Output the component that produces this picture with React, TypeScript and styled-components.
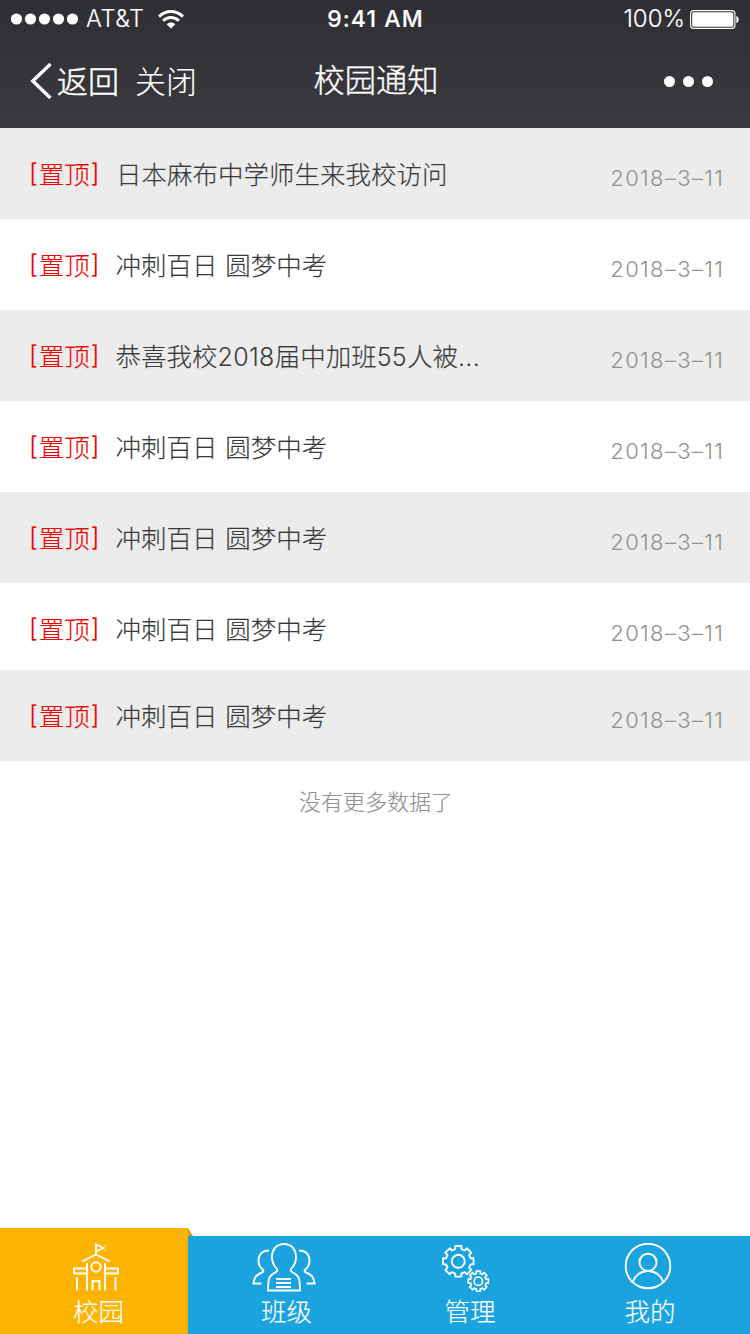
import React from 'react';
import styled, { createGlobalStyle } from 'styled-components';

const GlobalStyle = createGlobalStyle`
  * { box-sizing: border-box; }
  body {
    margin: 0;
    background: #fff;
    font-family: "Noto Sans CJK SC", "Liberation Sans", sans-serif;
    font-weight: 300;
    -webkit-text-stroke: 0.15px currentColor;
  }
`;

const Screen = styled.div`
  width: 750px;
  height: 1334px;
  display: flex;
  flex-direction: column;
  background: #fff;
  overflow: hidden;
`;

const Header = styled.header`
  height: 128px;
  flex: none;
  color: #fff;
  background: linear-gradient(#2f2e33, #3a393e);
`;

const StatusBar = styled.div`
  height: 38px;
  display: grid;
  grid-template-columns: 1fr auto 1fr;
  align-items: center;
  padding: 0 11px;
  font-family: Inter, "Liberation Sans", sans-serif;
  font-size: 24px;
  line-height: 38px;
`;

const StatusGroup = styled.div<{ $end?: boolean }>`
  display: flex;
  align-items: center;
  justify-content: ${(p) => (p.$end ? 'flex-end' : 'flex-start')};
`;

const Carrier = styled.span`
  margin: 0 13px 0 8px;
  font-size: 23.5px;
  font-weight: 300;
  letter-spacing: 0.6px;
`;

const Clock = styled.span`
  padding-left: 1px;
  font-size: 23px;
  font-weight: 500;
  letter-spacing: 1.1px;
`;

const Percent = styled.span`
  margin-right: 5px;
  font-size: 24px;
  font-weight: 300;
`;

const NavBar = styled.div`
  height: 90px;
  display: grid;
  grid-template-columns: 1fr auto 1fr;
  align-items: center;
  padding: 0 37px 4px 30px;
  font-size: 31px;
  line-height: 46px;
`;

const NavActions = styled.div`
  display: flex;
  align-items: center;
`;

const NavLink = styled.a<{ $gap: number; $stroke: number }>`
  margin-left: ${(p) => p.$gap}px;
  padding-bottom: 2px;
  -webkit-text-stroke-width: ${(p) => p.$stroke}px;
`;

const Title = styled.h1`
  margin: 0;
  padding: 0 0 4px 9px;
  font-size: 31.25px;
  font-weight: 300;
  -webkit-text-stroke-width: 0.35px;
`;

const MoreButton = styled.div`
  display: flex;
  justify-content: flex-end;
  gap: 8px;
`;

const MoreDot = styled.span`
  width: 11px;
  height: 11px;
  border-radius: 50%;
  background: #fff;
`;

const List = styled.main`
  flex: 1;
`;

const Row = styled.article<{ $shaded: boolean; $short?: boolean }>`
  height: ${(p) => (p.$short ? 87 : 91)}px;
  display: flex;
  align-items: flex-start;
  padding: 26px 27px 0 29px;
  background: ${(p) => (p.$shaded ? '#ececec' : '#fff')};
`;

const Pin = styled.span<{ $wide?: boolean }>`
  display: flex;
  gap: 1px;
  width: ${(p) => (p.$wide ? 87 : 86.5)}px;
  color: #f00000;
  font-size: 25.5px;
  line-height: 38px;
`;

const Bracket = styled.span`
  font-family: Inter, "Liberation Sans", sans-serif;
  font-size: 25px;
  line-height: 38px;
`;

const Subject = styled.span`
  flex: 1;
  color: #3a3a3a;
  font-size: 25.5px;
  line-height: 38px;
  white-space: pre;
  word-spacing: 2px;
`;

const Numeral = styled.span`
  font-family: Inter, "Liberation Sans", sans-serif;
  font-size: 25px;
  letter-spacing: 0.3px;
  -webkit-text-stroke-width: 0;
`;

const PostDate = styled.time`
  margin-right: -1.3px;
  padding-top: 5px;
  color: #919191;
  font-family: Inter, "Liberation Sans", sans-serif;
  font-size: 22px;
  line-height: 38px;
  letter-spacing: 1.35px;
  -webkit-text-stroke-width: 0;
`;

const EndNote = styled.p`
  margin: 0;
  padding: 23px 0 0 2px;
  text-align: center;
  color: #919191;
  font-size: 22px;
  line-height: 32px;
`;

const TabBar = styled.nav`
  flex: none;
  height: 106px;
  display: grid;
  grid-template-columns: 188px 190px 190px 182px;
  align-items: end;
`;

const Tab = styled.a<{ $active?: boolean }>`
  position: relative;
  height: ${(p) => (p.$active ? 106 : 98)}px;
  display: flex;
  flex-direction: column;
  align-items: flex-start;
  justify-content: flex-end;
  padding-bottom: 5px;
  color: #fff;
  background: ${(p) => (p.$active ? '#fdb400' : '#1ba3e0')};
  font-size: 25.5px;
  line-height: 38px;
`;

const TabIcon = styled.span<{ $inset: number }>`
  display: flex;
  margin: 0 0 -1px ${(p) => p.$inset}px;
`;

const TabLabel = styled.span<{ $inset: number }>`
  margin-left: ${(p) => p.$inset}px;
`;

const Fold = styled.span`
  position: absolute;
  left: 188px;
  top: 0;
  width: 5px;
  height: 8px;
  background: #d3a012;
  clip-path: polygon(0 0, 100% 100%, 0 100%);
`;

const SignalDots = () => (
  <svg width="67" height="12" fill="#fff">
    {[5.5, 19.5, 33.5, 47.5, 61.5].map((x) => (
      <circle key={x} cx={x} cy="6" r="5.6" />
    ))}
  </svg>
);

const Wifi = () => (
  <svg width="26" height="19" viewBox="0 0 26 19" fill="none" stroke="#fff" strokeWidth="2.9">
    <path d="M1 6.6C7.8-.2 18.2-.2 25 6.6" />
    <path d="M5.1 10.8c4.5-4.4 11.3-4.4 15.8 0" />
    <path d="M13 18.6l-4.3-4.2c2.5-2.4 6.1-2.4 8.6 0z" fill="#fff" stroke="none" />
  </svg>
);

const Battery = () => (
  <svg width="49" height="19" viewBox="0 0 49 19">
    <rect x=".6" y=".6" width="44.3" height="17.8" rx="3" fill="none" stroke="#fff" strokeWidth="1.1" />
    <rect x="2.2" y="2.2" width="41.1" height="14.6" rx="1.6" fill="#fff" />
    <path d="M46.3 6c3.3 1 3.3 6 0 7z" fill="#fff" />
  </svg>
);

const BackArrow = () => (
  <svg width="22" height="36" viewBox="0 0 22 36" fill="none" stroke="#fff" strokeWidth="3.4">
    <path d="M20.500 1L2.800 18l17.700 17" />
  </svg>
);

const iconProps = { fill: 'none', stroke: '#fff', strokeWidth: 1.9 };

const SchoolIcon = () => (
  <svg width="48" height="50" viewBox="0 0 48 50" {...iconProps}>
    <path d="M24 13V2.500l7.500 3.500-7.500 3.500M10 19.500l14-7 14 7" />
    <path d="M15 21v27.500M33 21v27.500M5 35v13.500M43.500 35v13.500" />
    <path d="M15 26.500H2v5h13M33 26.500h13v5H33M20.500 48.500V39h7v9.500" />
    <circle cx="24" cy="25" r="4.700" />
  </svg>
);

const ClassIcon = () => (
  <svg width="64" height="50" viewBox="0 0 64 50" {...iconProps}>
    <path d="M16 48.500q0-9 1.500-13 1.500-3 6.500-5.500 2-1 1-3-5-5-5-12C20 7 25 2 32 2S44 7 44 15q0 7-5 12-1 2 1 3 5 2.500 6.500 5.500 1.500 4 1.500 13z" />
    <path d="M17 8.500C10 8.500 6.500 13 6.500 19q0 5 4.500 9 1 1.500-1 2.500-5 2-6.500 4.500-2 3-2 6.500h8M47 8.500C54 8.500 57.500 13 57.500 19q0 5-4.500 9-1 1.500 1 2.500 5 2 6.500 4.500 2 3 2 6.500h-8" />
    <path d="M24 37h15M24 41h15M24 45h15" />
  </svg>
);

function gearPath(cx: number, cy: number, outer: number, inner: number) {
  const points: string[] = [];
  for (let i = 0; i < 8; i++) {
    const base = (i * Math.PI) / 4;
    [
      [-0.25, inner],
      [-0.2, outer],
      [0.2, outer],
      [0.25, inner],
    ].forEach(([offset, r]) => {
      points.push(`${(cx + r * Math.cos(base + offset)).toFixed(2)} ${(cy + r * Math.sin(base + offset)).toFixed(2)}`);
    });
  }
  return `M${points.join('L')}Z`;
}

const GearsIcon = () => (
  <svg width="50" height="50" viewBox="0 0 50 50" {...iconProps} strokeLinejoin="round">
    <path d={gearPath(17.3, 19.3, 15.6, 12.6)} />
    <circle cx="17.3" cy="19.3" r="6.500" />
    <path d={gearPath(37.3, 39.2, 10.3, 8)} strokeWidth="1.700" />
    <circle cx="37.3" cy="39.2" r="4.200" strokeWidth="1.700" />
  </svg>
);

const ProfileIcon = () => (
  <svg width="48" height="50" viewBox="0 0 48 50" {...iconProps}>
    <circle cx="24" cy="24" r="22.300" />
    <circle cx="24" cy="20.300" r="8.600" />
    <path d="M8.800 39.800c2.200-6.500 8-10.800 15.200-10.800s13 4.300 15.200 10.800" />
  </svg>
);

const notices: { subject: React.ReactNode; wide?: boolean; short?: boolean }[] = [
  { subject: '日本麻布中学师生来我校访问', wide: true },
  { subject: '冲刺百日 圆梦中考' },
  {
    subject: (
      <>
        恭喜我校<Numeral>2018</Numeral>届中加班<Numeral>55</Numeral>人被<Numeral>...</Numeral>
      </>
    ),
  },
  { subject: '冲刺百日 圆梦中考' },
  { subject: '冲刺百日 圆梦中考' },
  { subject: '冲刺百日 圆梦中考', short: true },
  { subject: '冲刺百日 圆梦中考' },
];

const tabs = [
  { label: '校园', icon: <SchoolIcon />, iconInset: 72, labelInset: 73, active: true },
  { label: '班级', icon: <ClassIcon />, iconInset: 64, labelInset: 73 },
  { label: '管理', icon: <GearsIcon />, iconInset: 63, labelInset: 66.5 },
  { label: '我的', icon: <ProfileIcon />, iconInset: 56, labelInset: 56.5 },
];

export default function App() {
  return (
    <Screen>
      <GlobalStyle />
      <Header>
        <StatusBar>
          <StatusGroup>
            <SignalDots />
            <Carrier>AT&amp;T</Carrier>
            <Wifi />
          </StatusGroup>
          <Clock>9:41 AM</Clock>
          <StatusGroup $end>
            <Percent>100%</Percent>
            <Battery />
          </StatusGroup>
        </StatusBar>
        <NavBar>
          <NavActions>
            <BackArrow />
            <NavLink $gap={5} $stroke={0.5}>返回</NavLink>
            <NavLink $gap={16} $stroke={0.1}>关闭</NavLink>
          </NavActions>
          <Title>校园通知</Title>
          <MoreButton>
            <MoreDot />
            <MoreDot />
            <MoreDot />
          </MoreButton>
        </NavBar>
      </Header>
      <List>
        {notices.map((n, i) => (
          <Row key={i} $shaded={i % 2 === 0} $short={n.short}>
            <Pin $wide={n.wide}>
              <Bracket>[</Bracket>置顶<Bracket>]</Bracket>
            </Pin>
            <Subject>{n.subject}</Subject>
            <PostDate>2018–3–11</PostDate>
          </Row>
        ))}
        <EndNote>没有更多数据了</EndNote>
      </List>
      <TabBar>
        {tabs.map((t) => (
          <Tab key={t.label} $active={t.active}>
            <TabIcon $inset={t.iconInset}>{t.icon}</TabIcon>
            <TabLabel $inset={t.labelInset}>{t.label}</TabLabel>
            {t.active && <Fold />}
          </Tab>
        ))}
      </TabBar>
    </Screen>
  );
}
